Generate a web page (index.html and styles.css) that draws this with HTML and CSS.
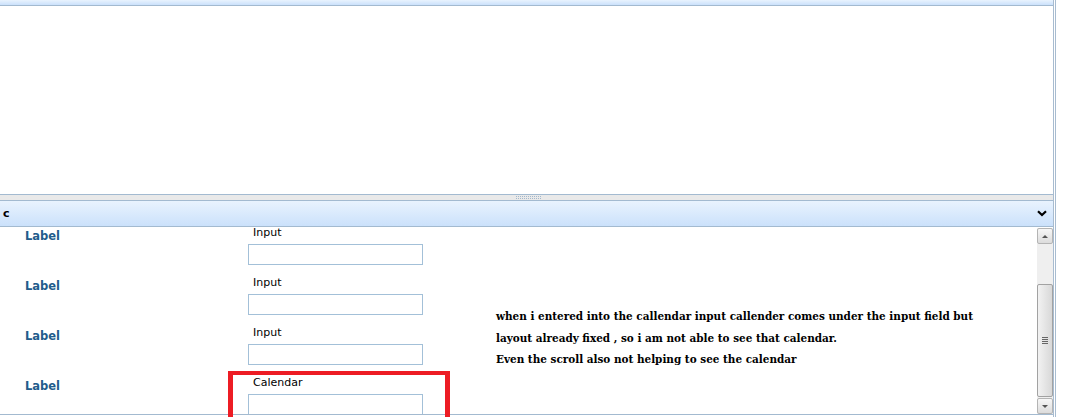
FILE: index.html
```html
<!DOCTYPE html>
<html lang="en">
<head>
  <meta charset="UTF-8" />
  <title>Border layout</title>
  <link rel="stylesheet" href="styles.css">
</head>
<body>

  <div class="viewport">
    <div class="layout">

      <section class="north">
        <div class="panel-head thin"></div>
        <div class="north-body"></div>
      </section>

      <div class="splitter"><span class="grip"></span></div>

      <section class="south">
        <div class="panel-head">
          <span class="title">c</span>
          <svg class="collapse" width="10" height="7" viewBox="0 0 10 7">
            <polyline points="1,1.2 5,5 9,1.2" fill="none" stroke="#000" stroke-width="2.2" />
          </svg>
        </div>

        <div class="south-body">
          <div class="scroll-area">
            <div class="form">
              <div class="row">
                <span class="label">Label</span>
                <div class="field">
                  <span class="caption">Input</span>
                  <input type="text" />
                </div>
              </div>
              <div class="row">
                <span class="label">Label</span>
                <div class="field">
                  <span class="caption">Input</span>
                  <input type="text" />
                </div>
              </div>
              <div class="row">
                <span class="label">Label</span>
                <div class="field">
                  <span class="caption">Input</span>
                  <input type="text" />
                </div>
              </div>
              <div class="row">
                <span class="label">Label</span>
                <div class="field">
                  <span class="caption">Calendar</span>
                  <input type="text" />
                </div>
              </div>
            </div>

            <div class="note">
              <p>when i entered into the callendar input callender comes under the input field but</p>
              <p>layout already fixed , so i am not able to see that calendar.</p>
              <p>Even the scroll also not helping to see the calendar</p>
            </div>
          </div>

          <div class="scrollbar">
            <span class="sb-btn up"></span>
            <span class="sb-track"></span>
            <span class="sb-thumb"><i></i></span>
            <span class="sb-gap"></span>
            <span class="sb-btn down"></span>
          </div>
        </div>
      </section>

    </div>
  </div>

  <div class="highlight"></div>

</body>
</html>
```

FILE: styles.css
```css
body {
  margin: 0;
  width: 1067px;
  height: 417px;
  overflow: hidden;
  background: #fff;
  font-family: 'DejaVu Sans', Tahoma, sans-serif;
  font-size: 11px;
}

.viewport {
  width: 1056px;
  height: 417px;
  box-sizing: border-box;
  padding-right: 1px;
  border-right: 1px solid #a8bcd0;
}

.layout {
  width: 1054px;
  height: 100%;
  box-sizing: border-box;
  border-right: 1px solid #a8bcd0;
  display: flex;
  flex-direction: column;
}

/* panel headers */
.panel-head {
  height: 25px;
  border-bottom: 1px solid #a3bad0;
  background: linear-gradient(to bottom, #e9f3fe, #cbe1fb);
  display: flex;
  align-items: center;
  justify-content: space-between;
  padding: 0 6px 0 3px;
}

.panel-head.thin {
  height: 5px;
}

.title {
  font-weight: bold;
  color: #000;
}

.collapse {
  display: block;
}

.north-body {
  height: 188px;
  border-bottom: 1px solid #a3bad0;
}

/* splitter */
.splitter {
  height: 5px;
  background: #e9e9e9;
  display: flex;
  justify-content: center;
  align-items: center;
}

.grip {
  width: 25px;
  height: 3px;
  display: flex;
  flex-direction: column;
  justify-content: space-between;
  margin-left: 3px;
}

.grip::before,
.grip::after {
  content: "";
  height: 1px;
  background: repeating-linear-gradient(90deg, #a3b8cc 0 1px, transparent 1px 2px);
}

/* south panel */
.south {
  border-top: 1px solid #a3bad0;
}

.south-body {
  height: 187px;
  border-bottom: 1px solid #a3bad0;
  display: flex;
}

.scroll-area {
  flex: 1;
  overflow: hidden;
  display: flex;
}

.form {
  width: 496px;
}

.row {
  display: flex;
  height: 50px;
}

.label {
  width: 223px;
  padding: 3px 0 0 25px;
  line-height: 13px;
  font-size: 11.5px;
  font-weight: bold;
  color: #225c8b;
}

.field {
  display: flex;
  flex-direction: column;
}

.caption {
  line-height: 12px;
  padding-left: 5px;
  color: #000;
}

.field input {
  margin: 5px 0 0;
  width: 175px;
  height: 21px;
  box-sizing: border-box;
  border: 1px solid #a3c0d8;
  padding: 0 3px;
  font: inherit;
}

.note {
  padding-top: 79px;
  font-family: 'DejaVu Serif', 'Liberation Serif', serif;
  font-weight: bold;
  font-stretch: condensed;
  font-size: 11.6px;
  color: #000;
}

.note p {
  margin: 0;
  line-height: 21.5px;
  white-space: nowrap;
}

/* scrollbar */
.scrollbar {
  width: 16px;
  margin-top: 1px;
  display: flex;
  flex-direction: column;
  background: #efefef;
}

.sb-btn {
  height: 16px;
  box-sizing: border-box;
  border: 1px solid #b4b4b4;
  border-radius: 2px;
  background: linear-gradient(to bottom, #f7f7f7, #dcdcdc);
  display: flex;
  align-items: center;
  justify-content: center;
}

.sb-btn::after {
  content: "";
  border-left: 3px solid transparent;
  border-right: 3px solid transparent;
}

.sb-btn.up::after {
  border-bottom: 3px solid #555;
}

.sb-btn.down::after {
  border-top: 3px solid #555;
}

.sb-track {
  height: 40px;
}

.sb-thumb {
  height: 113px;
  box-sizing: border-box;
  border: 1px solid #a2a2a2;
  border-radius: 2px;
  background: linear-gradient(to right, #f2f2f2, #d8d8d8);
  display: flex;
  align-items: center;
  justify-content: center;
}

.sb-thumb i {
  width: 6px;
  height: 7px;
  background: repeating-linear-gradient(to bottom, #666 0 1px, transparent 1px 2px);
}

.sb-gap {
  height: 1px;
}

/* annotation drawn over the screenshot */
.highlight {
  position: absolute;
  left: 228px;
  top: 371px;
  width: 222px;
  height: 60px;
  box-sizing: border-box;
  border: 4px solid #ed1c24;
  border-left-width: 5px;
  border-right-width: 5px;
}
```
